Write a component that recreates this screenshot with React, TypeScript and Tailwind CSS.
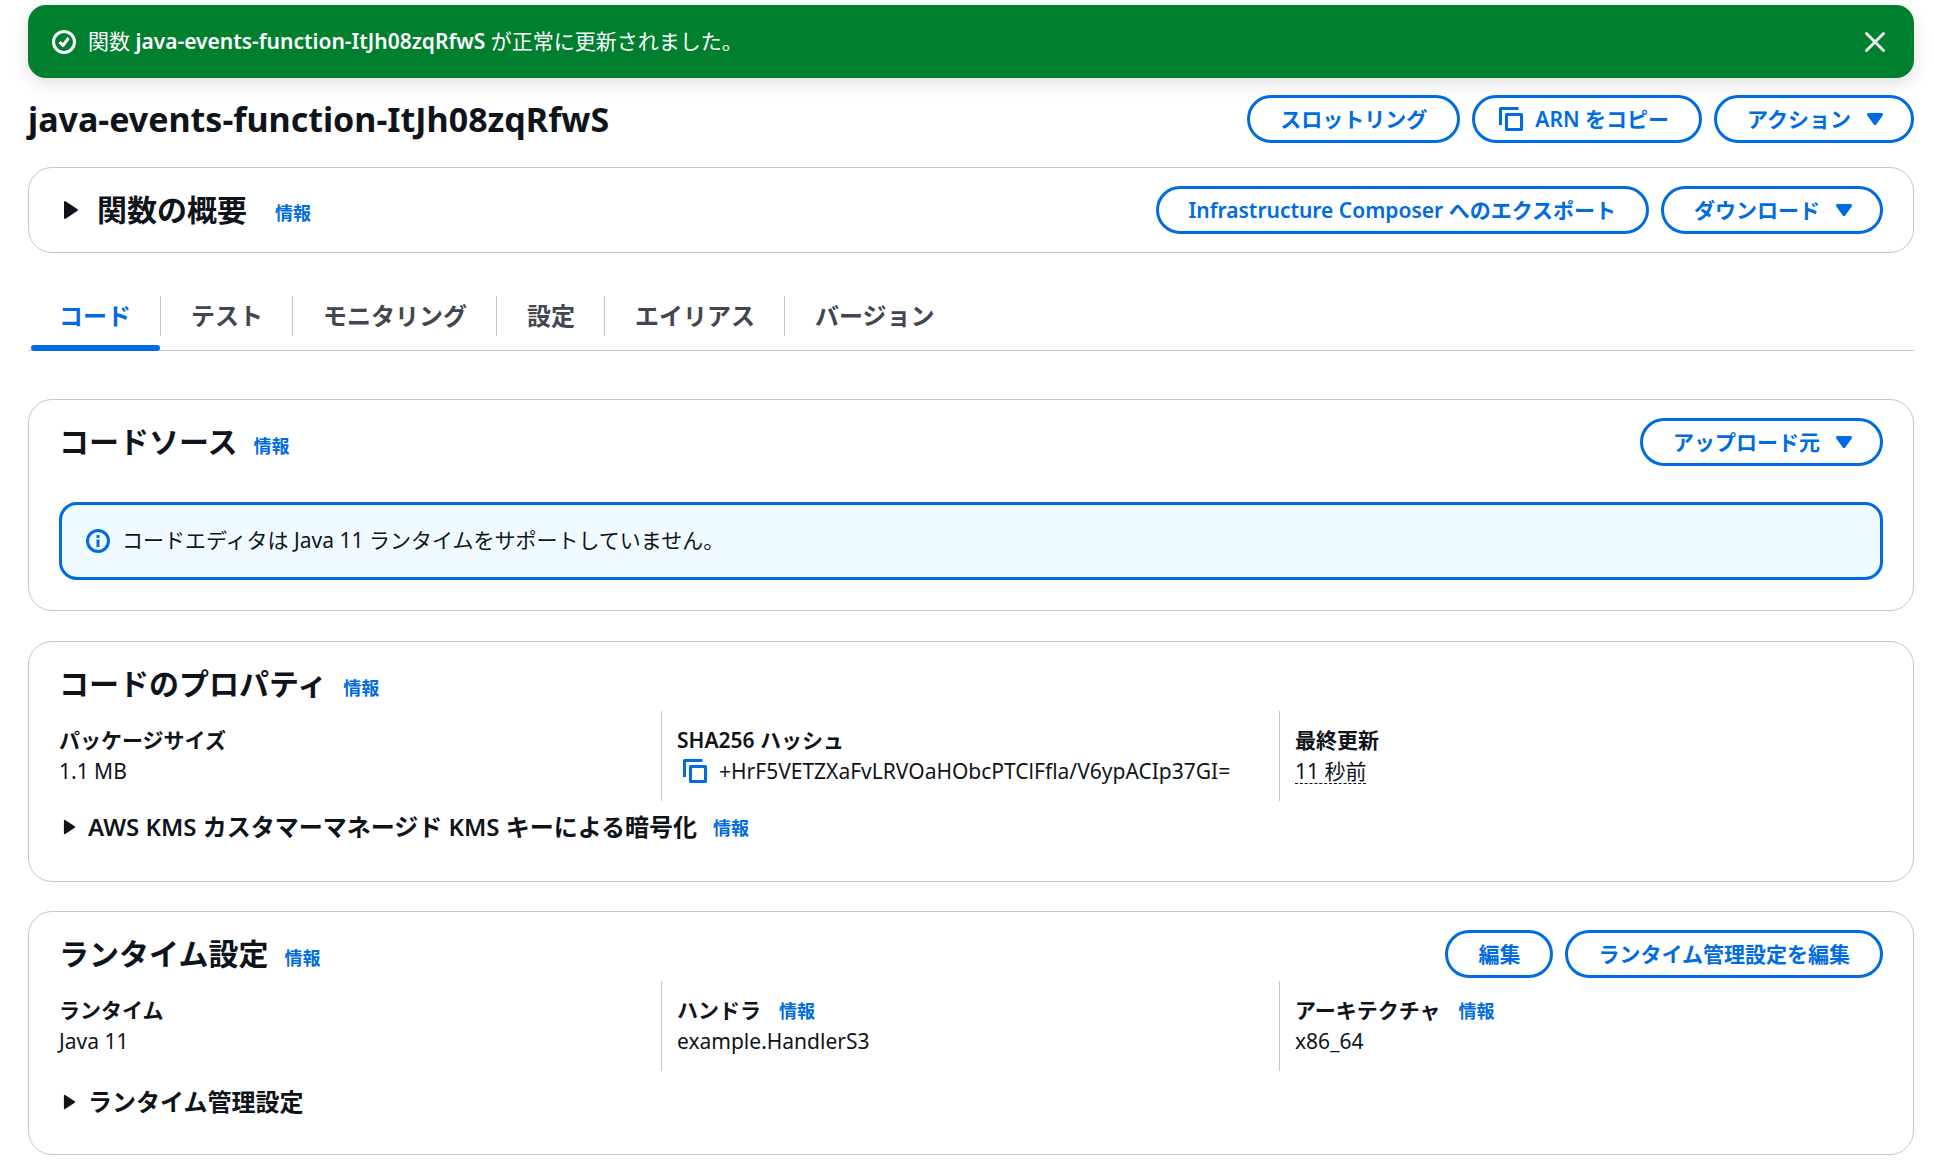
import type { ReactNode } from "react";

const tabs = ["コード", "テスト", "モニタリング", "設定", "エイリアス", "バージョン"];

function CopyIcon() {
  return (
    <svg viewBox="0 0 16 16" className="size-6 shrink-0" fill="none" stroke="currentColor" strokeWidth="2" strokeLinejoin="round">
      <path d="M15 5H5v10h10V5Z" />
      <path d="M13 1H1v11" />
    </svg>
  );
}

function CaretDown() {
  return (
    <svg viewBox="0 0 24 24" className="-mr-1.5 size-6 shrink-0" fill="currentColor" stroke="currentColor" strokeWidth="3" strokeLinejoin="round">
      <path d="M5.5 7.5h13L12 16.5l-6.5-9Z" />
    </svg>
  );
}

function CaretRight({ className }: { className: string }) {
  return (
    <svg viewBox="0 0 16 20" className={className} fill="currentColor" stroke="currentColor" strokeWidth="2" strokeLinejoin="round">
      <path d="M2 2v16l12-8L2 2Z" />
    </svg>
  );
}

function Button({ children }: { children: ReactNode }) {
  return (
    <button className="flex h-12 cursor-pointer items-center gap-3 whitespace-nowrap rounded-full border-3 border-[#006ce0] bg-white px-[30px] font-semibold text-[#006ce0] hover:bg-[#f0fbff]">
      {children}
    </button>
  );
}

function Info() {
  return (
    <a href="#" className="text-lg leading-6 font-semibold text-[#006ce0] hover:underline">
      情報
    </a>
  );
}

function Card({ children, className = "" }: { children: ReactNode; className?: string }) {
  return (
    <section className={`rounded-3xl border border-[#c6c6cd] bg-white px-[30px] pt-[18px] ${className}`}>
      {children}
    </section>
  );
}

function CardHeader({ title, actions }: { title: string; actions?: ReactNode }) {
  return (
    <header className="flex h-12 items-center justify-between">
      <div className="flex items-baseline gap-4">
        <h2 className="text-3xl leading-9 font-semibold">{title}</h2>
        <Info />
      </div>
      {actions && <div className="flex gap-3">{actions}</div>}
    </header>
  );
}

function Field({ label, info, divider, children }: { label: string; info?: boolean; divider?: boolean; children: ReactNode }) {
  return (
    <div className={divider ? "-ml-4 border-l border-[#c6c6cd] pt-3.5 pb-[15px] pl-[15px]" : "pt-3.5 pb-[15px]"}>
      <dt className="flex h-[31px] items-baseline gap-[18px] font-semibold">
        {label}
        {info && <Info />}
      </dt>
      <dd className="flex h-[30px] items-center">{children}</dd>
    </div>
  );
}

export default function App() {
  return (
    <main className="min-h-screen bg-white pt-[5px] pr-5 pb-[15px] pl-7 font-['Noto_Sans','Noto_Sans_CJK_JP',sans-serif] text-[21px] leading-[30px] text-[#0f141a]">
      <div role="status" className="flex h-[73px] items-center rounded-[18px] bg-[#00802f] px-6 text-white shadow-[0_6px_18px_rgba(0,7,22,0.12)]">
        <svg viewBox="0 0 24 24" className="mr-3 size-6" fill="none" stroke="currentColor" strokeWidth="3" strokeLinejoin="round">
          <circle cx="12" cy="12" r="10.5" />
          <path d="m7.5 12 3.500 3.500 5.500-7.500" />
        </svg>
        <p className="grow pb-0.5">
          関数 <strong className="font-semibold">java-events-function-ItJh08zqRfwS</strong> が正常に更新されました。
        </p>
        <button aria-label="閉じる" className="mr-[3px] cursor-pointer text-[#ebebf0]">
          <svg viewBox="0 0 24 24" className="size-6" fill="none" stroke="currentColor" strokeWidth="3" strokeLinecap="round">
            <path d="m3.500 3.500 17 17M20.500 3.500l-17 17" />
          </svg>
        </button>
      </div>

      <div className="mt-[17px] flex items-center justify-between">
        <h1 className="text-[34px] leading-[48px] font-bold">java-events-function-ItJh08zqRfwS</h1>
        <div className="flex gap-3">
          <Button>スロットリング</Button>
          <Button>
            <span className="-ml-1.5">
              <CopyIcon />
            </span>
            ARN をコピー
          </Button>
          <Button>
            アクション
            <CaretDown />
          </Button>
        </div>
      </div>

      <Card className="mt-6 pb-[18px]">
        <div className="flex h-12 items-center justify-between">
          <div className="flex items-baseline gap-7">
            <button className="flex cursor-pointer items-center">
              <CaretRight className="mr-[18px] ml-1 h-5 w-4" />
              <h2 className="text-3xl leading-9 font-semibold">関数の概要</h2>
            </button>
            <Info />
          </div>
          <div className="flex gap-3">
            <Button>Infrastructure Composer へのエクスポート</Button>
            <Button>
              ダウンロード
              <CaretDown />
            </Button>
          </div>
        </div>
      </Card>

      <nav className="mt-[43px] flex border-b border-[#c6c6cd] pl-px text-2xl leading-10 font-semibold text-[#424650]">
        {tabs.map((tab, i) => (
          <div key={tab} className="relative pb-[14px]">
            <a
              href="#"
              className={
                (i === 0 ? "text-[#006ce0] " : "hover:text-[#006ce0] ") +
                (i < tabs.length - 1 ? "block border-r border-[#c6c6cd] pr-[29px] pl-[30px]" : "block px-[30px]")
              }
            >
              {tab}
            </a>
            {i === 0 && <span className="absolute right-px -bottom-px left-0.5 h-1.5 rounded-full bg-[#006ce0]" />}
          </div>
        ))}
      </nav>

      <Card className="mt-12 pb-[30px]">
        <CardHeader
          title="コードソース"
          actions={
            <Button>
              アップロード元
              <CaretDown />
            </Button>
          }
        />
        <div className="mt-9 flex h-[78px] items-center gap-3 rounded-[18px] border-3 border-[#006ce0] bg-[#f0fbff] px-6">
          <svg viewBox="0 0 24 24" className="size-6 text-[#006ce0]" fill="none" stroke="currentColor" strokeWidth="3">
            <circle cx="12" cy="12" r="10.5" />
            <path d="M12 10.5V18M12 6v3" />
          </svg>
          <p className="pb-0.5">コードエディタは Java 11 ランタイムをサポートしていません。</p>
        </div>
      </Card>

      <Card className="mt-[30px] pb-[38px]">
        <CardHeader title="コードのプロパティ" />
        <dl className="mt-[3px] grid grid-cols-3 gap-[30px]">
          <Field label="パッケージサイズ">1.1 MB</Field>
          <Field label="SHA256 ハッシュ" divider>
            <button aria-label="コピー" className="mr-3 ml-1.5 cursor-pointer text-[#006ce0]">
              <CopyIcon />
            </button>
            +HrF5VETZXaFvLRVOaHObcPTClFfla/V6ypACIp37GI=
          </Field>
          <Field label="最終更新" divider>
            <span className="border-b border-dashed border-[#0f141a] leading-6">11 秒前</span>
          </Field>
        </dl>
        <div className="mt-2.5 flex items-baseline gap-4">
          <button className="flex cursor-pointer items-center text-2xl leading-8 font-semibold">
            <CaretRight className="mr-3 ml-1 h-4 w-[13px]" />
            AWS KMS カスタマーマネージド KMS キーによる暗号化
          </button>
          <Info />
        </div>
      </Card>

      <Card className="mt-[29px] pb-9">
        <CardHeader
          title="ランタイム設定"
          actions={
            <>
              <Button>編集</Button>
              <Button>ランタイム管理設定を編集</Button>
            </>
          }
        />
        <dl className="mt-[3px] grid grid-cols-3 gap-[30px]">
          <Field label="ランタイム">Java 11</Field>
          <Field label="ハンドラ" info divider>
            example.HandlerS3
          </Field>
          <Field label="アーキテクチャ" info divider>
            x86_64
          </Field>
        </dl>
        <button className="mt-[15px] flex cursor-pointer items-center text-2xl leading-8 font-semibold">
          <CaretRight className="mr-3 ml-1 h-4 w-[13px]" />
          ランタイム管理設定
        </button>
      </Card>
    </main>
  );
}
